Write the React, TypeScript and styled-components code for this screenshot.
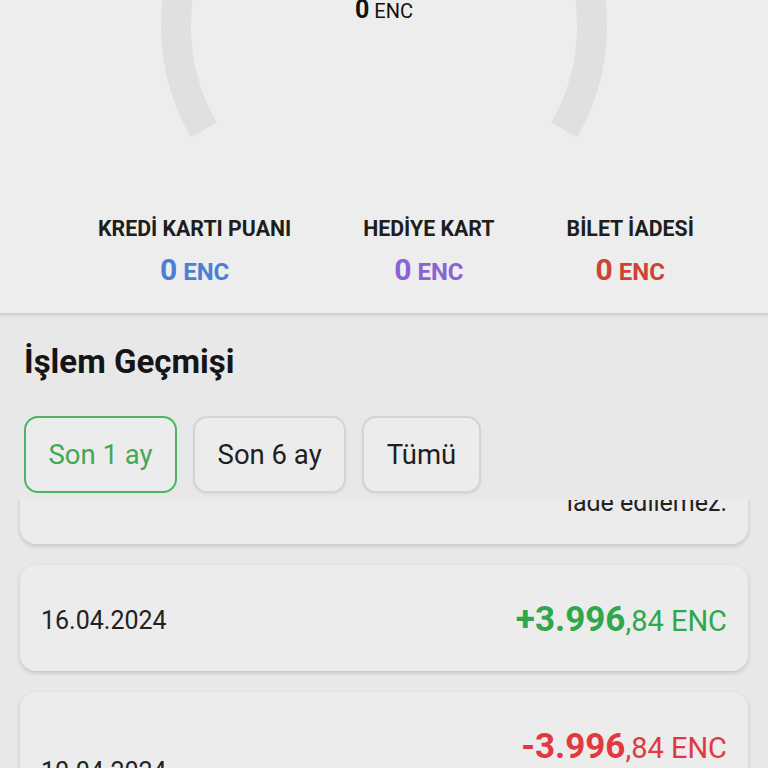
import React, { useLayoutEffect, useRef } from 'react';
import styled, { createGlobalStyle } from 'styled-components';

const GlobalStyle = createGlobalStyle`
  html, body {
    margin: 0;
    padding: 0;
    background: #e8e8e8;
    font-family: Roboto, "Noto Sans", sans-serif;
    color: #1f1f1f;
  }
  * { box-sizing: border-box; }
`;

const Screen = styled.div`
  width: 768px;
  height: 768px;
  overflow: hidden;
  display: flex;
  flex-direction: column;
  background: #e8e8e8;
`;

const TopSection = styled.section`
  flex: 0 0 315px;
  background: #ededed;
  border-bottom: 2px solid #d3d3d3;
  box-shadow: 0 1px 3px rgba(0, 0, 0, 0.08);
  display: flex;
  flex-direction: column;
`;

const GaugeArea = styled.div`
  position: relative;
  height: 160px;
`;

const GaugeSvg = styled.svg`
  display: block;
`;

const GaugeValue = styled.div`
  position: absolute;
  top: -5px;
  left: 0;
  right: 0;
  text-align: center;
  line-height: 30px;
  color: #111;
`;

const GaugeNumber = styled.span`
  font-size: 25px;
  font-weight: 700;
`;

const GaugeUnit = styled.span`
  font-size: 20px;
  font-weight: 400;
  margin-left: 5px;
`;

const StatsRow = styled.div`
  display: flex;
  gap: 72px;
  padding-left: 98px;
  margin-top: 56px;
`;

const Stat = styled.div`
  display: flex;
  flex-direction: column;
  align-items: center;
`;

const StatLabel = styled.div`
  font-size: 21.3px;
  line-height: 26px;
  font-weight: 700;
  color: #1e1e1e;
  white-space: nowrap;
`;

const StatValue = styled.div<{ $color: string }>`
  display: flex;
  align-items: baseline;
  gap: 6px;
  margin-top: 12px;
  line-height: 32px;
  font-weight: 700;
  color: ${(p) => p.$color};
`;

const StatNumber = styled.span`
  font-size: 30px;
`;

const StatUnit = styled.span`
  font-size: 24px;
`;

const History = styled.section`
  flex: 1;
  display: flex;
  flex-direction: column;
  min-height: 0;
  padding-top: 28px;
`;

const Title = styled.h2`
  margin: 0 0 0 24px;
  font-size: 33px;
  line-height: 38px;
  font-weight: 700;
  color: #151515;
`;

const Filters = styled.div`
  display: flex;
  gap: 16px;
  margin: 35px 0 0 24px;
`;

const Chip = styled.button<{ $active?: boolean }>`
  height: 77px;
  padding: 0 22.5px;
  border-radius: 14px;
  border: 2px solid ${(p) => (p.$active ? '#4db460' : '#d4d4d4')};
  background: #ececec;
  color: ${(p) => (p.$active ? '#43a857' : '#1f1f1f')};
  font-family: Roboto, sans-serif;
  font-size: 27.5px;
  box-shadow: ${(p) => (p.$active ? 'none' : '0 1px 2px rgba(0,0,0,0.08)')};
`;

const List = styled.div`
  position: relative;
  flex: 1;
  min-height: 0;
  margin-top: 7px;
  overflow: hidden;
`;

const ListInner = styled.div`
  display: flex;
  flex-direction: column;
  gap: 21px;
  padding: 0 20px 40px;
`;

const Card = styled.div`
  display: flex;
  align-items: center;
  justify-content: space-between;
  padding: 35px 21px 30px;
  border-radius: 16px;
  background: #ececec;
  box-shadow: 0 2px 4px rgba(0, 0, 0, 0.16);
`;

const DateText = styled.div`
  font-size: 25px;
  line-height: 30px;
  color: #222;
`;

const Right = styled.div`
  display: flex;
  flex-direction: column;
  align-items: flex-end;
  text-align: right;
`;

const Amount = styled.div<{ $color: string }>`
  display: flex;
  align-items: baseline;
  line-height: 40px;
  color: ${(p) => p.$color};
  white-space: nowrap;
`;

const AmountMain = styled.span`
  font-size: 35px;
  font-weight: 700;
`;

const AmountRest = styled.span`
  font-size: 29px;
`;

const Note = styled.div`
  margin-top: 4px;
  font-size: 25px;
  line-height: 22px;
  color: #222;

  & + & {
    margin-top: 0;
  }
`;

type Tx = { date: string; sign: '+' | '-'; whole: string; cents: string; note?: string[] };

const txs: Tx[] = [
  { date: '18.04.2024', sign: '-', whole: '1.250', cents: '00', note: ['Hediye kart ile yapılan ödemeler', 'iade edilemez.'] },
  { date: '16.04.2024', sign: '+', whole: '3.996', cents: '84' },
  { date: '10.04.2024', sign: '-', whole: '3.996', cents: '84', note: ['Bilet satın alımı', 'PNR: 7XK2QF'] },
];

const stats = [
  { label: 'KREDİ KARTI PUANI', color: '#4b7fd6' },
  { label: 'HEDİYE KART', color: '#8a62d6' },
  { label: 'BİLET İADESİ', color: '#cc4436' },
];

// arc of a 240° gauge, open at the bottom
const arcPath = (cx: number, cy: number, r: number) => {
  const a0 = (150 * Math.PI) / 180;
  const a1 = (390 * Math.PI) / 180;
  const x0 = cx + r * Math.cos(a0);
  const y0 = cy + r * Math.sin(a0);
  const x1 = cx + r * Math.cos(a1);
  const y1 = cy + r * Math.sin(a1);
  return `M ${x0} ${y0} A ${r} ${r} 0 1 1 ${x1} ${y1}`;
};

export default function App() {
  const listRef = useRef<HTMLDivElement>(null);
  const firstRef = useRef<HTMLDivElement>(null);

  useLayoutEffect(() => {
    const list = listRef.current;
    const first = firstRef.current;
    if (!list || !first) return;
    // scrolled so the first card's bottom shows 44px under the filters
    list.scrollTop = first.offsetTop + first.offsetHeight - 44;
  }, []);

  return (
    <Screen>
      <GlobalStyle />
      <TopSection>
        <GaugeArea>
          <GaugeSvg width="768" height="160" viewBox="0 0 768 160">
            <path d={arcPath(384, 26, 208)} fill="none" stroke="#dee1e0" strokeWidth="30" />
          </GaugeSvg>
          <GaugeValue>
            <GaugeNumber>0</GaugeNumber>
            <GaugeUnit>ENC</GaugeUnit>
          </GaugeValue>
        </GaugeArea>
        <StatsRow>
          {stats.map((s) => (
            <Stat key={s.label}>
              <StatLabel>{s.label}</StatLabel>
              <StatValue $color={s.color}>
                <StatNumber>0</StatNumber>
                <StatUnit>ENC</StatUnit>
              </StatValue>
            </Stat>
          ))}
        </StatsRow>
      </TopSection>

      <History>
        <Title>İşlem Geçmişi</Title>
        <Filters>
          <Chip $active>Son 1 ay</Chip>
          <Chip>Son 6 ay</Chip>
          <Chip>Tümü</Chip>
        </Filters>
        <List ref={listRef}>
          <ListInner>
            {txs.map((t, i) => (
              <Card key={t.date} ref={i === 0 ? firstRef : undefined}>
                <DateText>{t.date}</DateText>
                <Right>
                  <Amount $color={t.sign === '+' ? '#2ea84b' : '#e03a40'}>
                    <AmountMain>{t.sign}{t.whole}</AmountMain>
                    <AmountRest>,{t.cents} ENC</AmountRest>
                  </Amount>
                  {t.note?.map((n) => <Note key={n}>{n}</Note>)}
                </Right>
              </Card>
            ))}
          </ListInner>
        </List>
      </History>
    </Screen>
  );
}
